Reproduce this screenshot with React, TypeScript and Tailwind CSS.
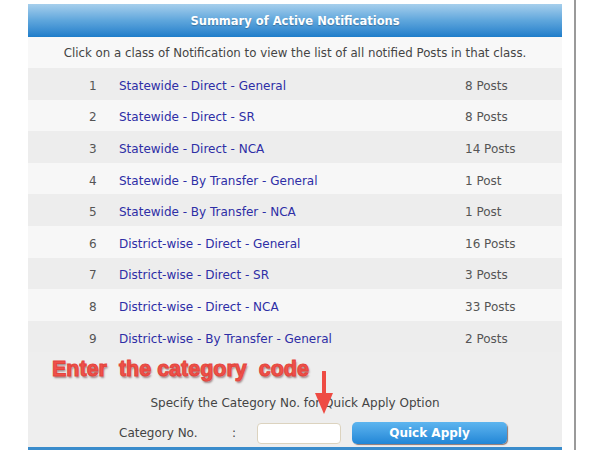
import * as React from "react"

const rows = [
  { n: 1, name: "Statewide - Direct - General", count: "8 Posts" },
  { n: 2, name: "Statewide - Direct - SR", count: "8 Posts" },
  { n: 3, name: "Statewide - Direct - NCA", count: "14 Posts" },
  { n: 4, name: "Statewide - By Transfer - General", count: "1 Post" },
  { n: 5, name: "Statewide - By Transfer - NCA", count: "1 Post" },
  { n: 6, name: "District-wise - Direct - General", count: "16 Posts" },
  { n: 7, name: "District-wise - Direct - SR", count: "3 Posts" },
  { n: 8, name: "District-wise - Direct - NCA", count: "33 Posts" },
  { n: 9, name: "District-wise - By Transfer - General", count: "2 Posts" },
]

export default function App() {
  return (
    <div className="flex h-[450px] w-[600px] overflow-hidden bg-white font-['DejaVu_Sans',sans-serif]">
      <div className="ml-[28px] flex w-[534px] flex-col pt-[4px]">
        {/* header */}
        <div className="flex h-[33px] items-center justify-center bg-gradient-to-b from-[#a6cfec] via-[#5ea6dc] to-[#1d7dca] pt-[2px]">
          <span className="text-[11.5px] font-bold text-white [text-shadow:0_1px_1px_rgba(0,0,0,0.25)]">
            Summary of Active Notifications
          </span>
        </div>

        <div className="flex h-[31px] items-center justify-center bg-[#f8f8f8] pt-[2px] text-[11.8px] text-[#444]">
          Click on a class of Notification to view the list of all notified Posts in that class.
        </div>

        {/* rows */}
        {rows.map((r) => (
          <div
            key={r.n}
            className={`flex h-[31.6px] items-center pt-[4px] text-[12px] ${r.n % 2 ? "bg-[#ededed]" : "bg-[#f7f7f7]"}`}
          >
            <span className="ml-[61px] w-[30px] text-[#555]">{r.n}</span>
            <span className="w-[346px] text-[#2e2ea6]">{r.name}</span>
            <span className="text-[#555]">{r.count}</span>
          </div>
        ))}

        {/* quick apply */}
        <div className="relative flex flex-1 flex-col bg-[#eeeeee]">
          <div className="ml-[24px] mt-[5px] whitespace-pre font-['Liberation_Sans',sans-serif] text-[21.5px] font-bold leading-[24px] text-[#f0514a] [-webkit-text-stroke:1px_#e4443c] [text-shadow:1px_2px_2px_rgba(60,0,0,0.45)]">
            {"Enter  the category  code"}
          </div>
          <div className="mt-[14px] text-center text-[12px] leading-[16px] text-[#444]">
            Specify the Category No. for Quick Apply Option
          </div>
          <div className="mt-[11px] flex items-center text-[12px] text-[#444]">
            <span className="ml-[91px] w-[113px]">Category No.</span>
            <span className="w-[25px]">:</span>
            <input
              className="h-[21px] w-[84px] rounded-[4px] border border-[#dcd3bf] bg-white outline-none"
              readOnly
            />
            <button className="ml-[11px] h-[22px] w-[155px] rounded-[5px] bg-gradient-to-b from-[#5db5ef] to-[#1f86d6] text-[12px] font-bold text-white shadow-[1px_1px_1px_rgba(80,40,30,0.6)]">
              Quick Apply
            </button>
          </div>
          {/* red arrow annotation */}
          <svg className="absolute left-[286px] top-[19px]" width="20" height="44" viewBox="0 0 20 44">
            <line x1="10" y1="1" x2="10" y2="26" stroke="#ee4b43" strokeWidth="4" strokeLinecap="round" />
            <polygon points="1,22 19,22 10,43" fill="#ee4b43" />
          </svg>
        </div>
        <div className="h-[3px] bg-[#3a8ccc]" />
      </div>
      <div className="ml-[12px] w-[1.5px] bg-[#9a9a9a]" />
    </div>
  )
}
